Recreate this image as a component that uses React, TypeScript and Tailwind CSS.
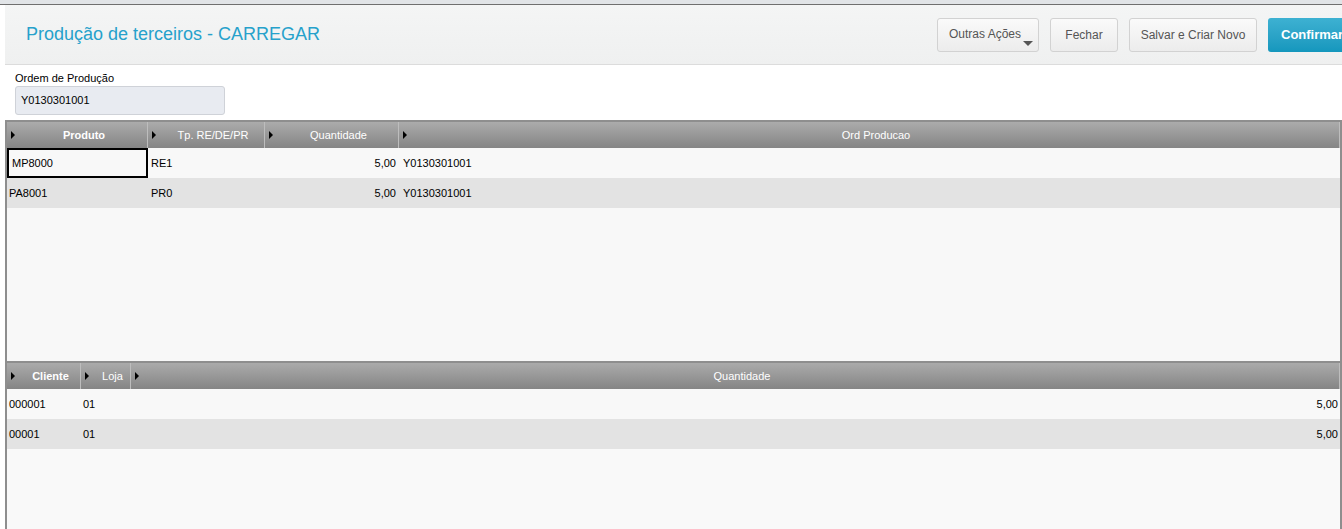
import React from 'react';

type Col = { label: string; width?: string; bold?: boolean };

const Arrow = () => (
  <span className="absolute left-[4px] top-1/2 -translate-y-1/2 w-0 h-0 border-y-[4px] border-y-transparent border-l-[4px] border-l-black" />
);

function GridHeader({ cols }: { cols: Col[] }) {
  return (
    <div className="flex h-[26px] bg-gradient-to-b from-[#ababab] to-[#858585] text-white text-[11px]">
      {cols.map((c, i) => (
        <div
          key={i}
          className={`relative flex items-center justify-center pl-[14px] border-r border-[#bdbdbd] ${c.width ?? 'flex-1'} ${c.bold ? 'font-bold' : ''}`}
        >
          <Arrow />
          {c.label}
        </div>
      ))}
    </div>
  );
}

function Btn({ children, className = '' }: { children: React.ReactNode; className?: string }) {
  return (
    <button
      className={`relative h-[34px] rounded-[3px] border border-[#d2d2d2] bg-gradient-to-b from-[#fafafa] to-[#ececec] text-[12px] text-[#555] ${className}`}
    >
      {children}
    </button>
  );
}

export default function App() {
  const produtos = [
    { p: 'MP8000', t: 'RE1', q: '5,00', o: 'Y0130301001' },
    { p: 'PA8001', t: 'PR0', q: '5,00', o: 'Y0130301001' },
  ];
  const clientes = [
    { c: '000001', l: '01', q: '5,00' },
    { c: '00001', l: '01', q: '5,00' },
  ];

  return (
    <div className="w-[1342px] h-[529px] overflow-hidden bg-white font-['Liberation_Sans',Arial,sans-serif] flex flex-col">
      {/* top strip */}
      <div className="h-[5px] shrink-0 bg-[#e1e4e7] border-b border-[#6f6f6f]" />

      <div className="flex-1 flex flex-col pl-[5px] min-h-0">
        {/* Header */}
        <header className="h-[60px] shrink-0 flex items-center bg-gradient-to-b from-[#f4f5f5] to-[#eff0f0] border-b border-[#dcdcdc] overflow-hidden">
          <h1 className="pl-[21px] text-[18px] text-[#26a1cb] flex-1 whitespace-nowrap">
            Produção de terceiros - CARREGAR
          </h1>
          <div className="flex items-center gap-[11px] -mr-[21px] shrink-0">
            <Btn className="w-[102px] text-left pl-[11px]">
              <span className="relative -top-[1px]">Outras Ações</span>
              <span className="absolute right-[5px] bottom-[5px] w-0 h-0 border-x-[5px] border-x-transparent border-t-[5px] border-t-[#555]" />
            </Btn>
            <Btn className="w-[68px]">Fechar</Btn>
            <Btn className="w-[128px]">Salvar e Criar Novo</Btn>
            <button className="h-[34px] w-[95px] rounded-[3px] bg-gradient-to-b from-[#3db1d2] to-[#1497bd] text-white font-bold text-[13px] text-left pl-[13px]">
              Confirmar
            </button>
          </div>
        </header>

        {/* Form */}
        <div className="h-[55px] shrink-0 pl-[10px] pt-[7px]">
          <label className="block text-[11px] text-black leading-[13px]">Ordem de Produção</label>
          <div className="mt-[1px] w-[210px] h-[29px] rounded-[3px] border border-[#cfd2d8] bg-[#e8ebf1] flex items-center pl-[5px] text-[11px] text-black">
            Y0130301001
          </div>
        </div>

        {/* Grid 1 */}
        <div className="h-[241px] shrink-0 flex flex-col border-t-2 border-x-2 border-[#8e8e8e] bg-[#f8f8f8]">
          <GridHeader
            cols={[
              { label: 'Produto', width: 'w-[141px]', bold: true },
              { label: 'Tp. RE/DE/PR', width: 'w-[117px]' },
              { label: 'Quantidade', width: 'w-[134px]' },
              { label: 'Ord Producao' },
            ]}
          />
          {produtos.map((r, i) => (
            <div
              key={i}
              className={`flex h-[30px] items-center text-[11px] text-black ${i % 2 ? 'bg-[#e3e3e3]' : 'bg-[#f8f8f8]'}`}
            >
              <div
                className={`w-[141px] h-full flex items-center ${i === 0 ? 'border-2 border-black pl-[3px]' : 'pl-[2px]'}`}
              >
                {r.p}
              </div>
              <div className="w-[117px] pl-[3px]">{r.t}</div>
              <div className="w-[134px] pr-[3px] text-right">{r.q}</div>
              <div className="flex-1 pl-[4px]">{r.o}</div>
            </div>
          ))}
        </div>

        {/* Grid 2 */}
        <div className="flex-1 flex flex-col border-t-2 border-x-2 border-[#8e8e8e] bg-[#f9f9f9]">
          <GridHeader
            cols={[
              { label: 'Cliente', width: 'w-[74px]', bold: true },
              { label: 'Loja', width: 'w-[50px]' },
              { label: 'Quantidade' },
            ]}
          />
          {clientes.map((r, i) => (
            <div
              key={i}
              className={`flex h-[30px] items-center text-[11px] text-black ${i % 2 ? 'bg-[#e3e3e3]' : 'bg-[#f8f8f8]'}`}
            >
              <div className="w-[74px] pl-[2px]">{r.c}</div>
              <div className="w-[50px] pl-[2px]">{r.l}</div>
              <div className="flex-1 pr-[2px] text-right">{r.q}</div>
            </div>
          ))}
        </div>
      </div>
    </div>
  );
}
